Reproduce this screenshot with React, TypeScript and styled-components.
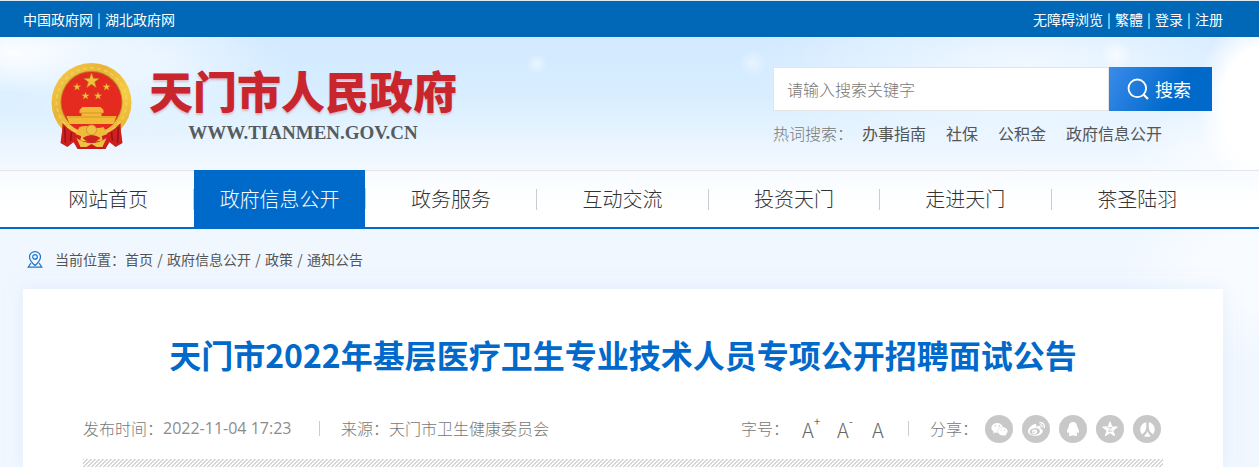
import React from "react";
import styled, { createGlobalStyle, css } from "styled-components";
import { FaWeixin, FaWeibo, FaRenren } from "react-icons/fa";

const GlobalStyle = createGlobalStyle`
  * { box-sizing: border-box; }
  body {
    margin: 0;
    background: #f0f7ff;
    color: #555;
    font: 400 14px/24px "Noto Sans CJK SC", sans-serif;
  }
  a { color: inherit; text-decoration: none; }
  button, input { font: inherit; }
`;

const Page = styled.div`
  background:
    radial-gradient(ellipse 140px 90px at 100% 270px, #f8fbff 40%, transparent),
    #f0f7ff;
`;

const Wrap = styled.div`
  padding: 0 36px 0 23px;
`;

const TopBar = styled(Wrap)`
  display: flex;
  justify-content: space-between;
  align-items: center;
  height: 37px;
  border-top: 1px solid #dfe9f2;
  background: #0068b7;
  color: #fff;
`;

const TopLinks = styled.nav`
  display: flex;
`;

const Bar = styled.span`
  width: 12px;
  text-align: center;
`;

const Header = styled.header`
  display: flex;
  justify-content: space-between;
  height: 133px;
  padding: 0 47px 0 51px;
  background:
    radial-gradient(circle 10px at 537px 27px, #ebf6ff, transparent),
    radial-gradient(circle 14px at 753px 26px, #e6f4ff, transparent),
    radial-gradient(circle 16px at calc(100% - 143px) 18px, #ffffffaa, #ffffff00),
    radial-gradient(ellipse 62px 90px at 100% 66px, #fff 60%, #ffffff00),
    radial-gradient(ellipse 110px 50px at calc(100% - 20px) 110px, #ffffffcc, #ffffff00),
    radial-gradient(ellipse 280px 90px at calc(100% - 230px) 30px, #ffffffaa, #ffffff00),
    radial-gradient(ellipse 80px 40px at 14px 16px, #ffffffee, #ffffff00),
    radial-gradient(ellipse 180px 70px at 80px 10px, #ffffff88, #ffffff00),
    radial-gradient(ellipse 150px 70px at 150px 30px, #ffffff66, #ffffff00),
    linear-gradient(#d2e9ff, #d8eeff 45%, #f4f9ff);
`;

const Brand = styled.a`
  display: flex;
  gap: 17px;
  padding-top: 26px;
`;

const BrandText = styled.div`
  display: flex;
  flex-direction: column;
  align-items: center;
`;

const BrandName = styled.strong`
  color: #c9252c;
  font-size: 44px;
  line-height: 54px;
  font-weight: 900;
  text-shadow: 0 2px 2px #c9252c44;
`;

const BrandUrl = styled.span`
  padding-top: 4px;
  color: #555b5e;
  font: 700 19px/24px "Liberation Serif", serif;
`;

const SearchArea = styled.div`
  width: 439px;
  padding-top: 30px;
`;

const SearchForm = styled.form`
  display: flex;
  height: 44px;
`;

const SearchInput = styled.input`
  flex: 1;
  min-width: 0;
  padding: 0 13px;
  border: 1px solid #e4e4e4;
  background: #fff;
  font-size: 16px;
  font-weight: 300;
  &::placeholder { color: #777; opacity: 1; }
`;

const SearchButton = styled.button`
  display: flex;
  align-items: center;
  gap: 6px;
  width: 103px;
  padding: 0 0 0 18px;
  border: 0;
  background: linear-gradient(120deg, #3b8bea, #0069ca 65%);
  color: #fff;
  font-size: 18px;
`;

const HotWords = styled.div`
  display: flex;
  gap: 20px;
  margin-top: 10px;
  font-size: 16px;
  white-space: nowrap;
`;

const HotLabel = styled.span`
  margin-right: -11px;
  color: #777;
  font-weight: 300;
`;

const Nav = styled.nav`
  border-top: 1px solid #e4e6e8;
  border-bottom: 2px solid #006aca;
  background: linear-gradient(#f7fbff, #fff 60%);
`;

const NavList = styled(Wrap)`
  display: grid;
  grid-template-columns: repeat(7, 1fr);
`;

const NavItem = styled.a<{ $active?: boolean }>`
  display: flex;
  align-items: center;
  height: 56px;
  color: #333;
  font-size: 20px;
  font-weight: 300;

  span {
    flex: 1;
    text-align: center;
  }

  &:not(:last-child)::after {
    content: "";
    width: 1px;
    height: 21px;
    background: #ccc;
  }

  ${(p) =>
    p.$active &&
    css`
      margin-top: -1px;
      height: 57px;
      color: #fff;
      span {
        line-height: 57px;
        background: #006aca;
      }
    `}
`;

const Crumbs = styled.nav`
  display: flex;
  align-items: center;
  height: 60px;
  padding: 0 27px;
  svg { margin-right: 12px; }
`;

const Slash = styled.span`
  width: 14px;
  text-align: center;
`;

const Card = styled.main`
  margin: 0 36px 0 23px;
  padding: 41px 60px 0;
  background: #fff;
  box-shadow: 0 0 14px #d3e4f788;
`;

const Title = styled.h1`
  margin: 0;
  color: #0069ca;
  font-size: 32px;
  line-height: 48px;
  font-weight: 700;
  text-align: center;
`;

const Meta = styled.div`
  display: flex;
  justify-content: space-between;
  align-items: center;
  height: 81px;
  padding: 19px 2px 0 0;
  color: #777;
  font-size: 16px;
  font-weight: 300;
  white-space: nowrap;
`;

const MetaGroup = styled.div`
  display: flex;
  align-items: center;
`;

const Divider = styled.i`
  width: 1px;
  height: 15px;
  margin: 0 21px 0 24px;
  background: #ccc;
`;

const DateText = styled.time`
  min-width: 132px;
  color: #8c8c8c;
  font-family: "Open Sans", sans-serif;
  font-weight: 400;
`;

const SizeButton = styled.button`
  position: relative;
  width: 35px;
  padding: 4px 0 0;
  border: 0;
  background: none;
  color: #666;
  font-size: 20px;
  text-align: left;

  &:last-of-type { width: 12px; }

  sup {
    position: absolute;
    top: -5px;
    left: 12px;
    font-size: 11px;
    font-weight: 400;
  }
`;

const Sizes = styled.div`
  display: flex;
  padding-left: 13px;
`;

const Shares = styled.div`
  display: flex;
  gap: 9px;
  padding: 2px 0 0 7px;
`;

const ShareLink = styled.a`
  display: grid;
  place-items: center;
  width: 28px;
  height: 28px;
  border-radius: 50%;
  background: #c8c8c8;
  color: #fff;
`;

const Hatch = styled.div`
  height: 8px;
  background: linear-gradient(135deg, #d4d4d4 12%, #fff 25%, #fff 38%, #d4d4d4 50%, #d4d4d4 62%, #fff 75%, #fff 88%, #d4d4d4) 0 0 / 4px 4px;
`;

const STAR = "M0-10 2.4-3.2 9.5-3.1 3.8 1.2 5.9 8.1 0 4-5.9 8.1-3.8 1.2-9.5-3.1-2.4-3.2Z";

const stars = [
  { x: 40, y: 18, s: 0.8 },
  { x: 25.5, y: 24, s: 0.4 },
  { x: 55, y: 24, s: 0.4 },
  { x: 34, y: 33, s: 0.4 },
  { x: 46.5, y: 33, s: 0.4 },
];

function Emblem() {
  return (
    <svg width="81" height="87" viewBox="0 0 80 87" aria-hidden="true">
      <defs>
        <linearGradient id="gold" x1="0" y1="0" x2="1" y2="1">
          <stop offset="0" stopColor="#f6d050" />
          <stop offset=".35" stopColor="#e8b437" />
          <stop offset=".65" stopColor="#f5cb45" />
          <stop offset="1" stopColor="#e0a82c" />
        </linearGradient>
      </defs>
      <path d="M12 58 68 58 71 80 64 84 58 79 54 86 26 86 22 79 16 84 9 80Z" fill="#c81a1c" />
      <ellipse cx="40" cy="39.500" rx="40" ry="39.500" fill="url(#gold)" />
      <ellipse cx="40" cy="39" rx="35" ry="34" fill="none" stroke="#f9dc70" strokeWidth="2" strokeDasharray="4 3" opacity=".5" />
      <circle cx="40" cy="39" r="31" fill="#b98024" />
      <circle cx="40" cy="39" r="30" fill="#e52a20" />
      {stars.map((p) => (
        <path key={p.x} d={STAR} transform={`translate(${p.x} ${p.y}) scale(${p.s})`} fill="#f4c23a" stroke="#c08a26" strokeWidth=".8" />
      ))}
      <path d="M31 44H49L52 47V50H50V53H65L62 61H18L15 53H30V50H28V47Z" fill="#f2b936" />
      <path d="M29 50H51M17 54H63" stroke="#d9952a" />
      <path d="M18 61H62Q52 70 40 70T18 61Z" fill="#e52a20" />
      <path d="M11 60Q20 70 30 72L27 85 22 79 16 83 10 79ZM69 60Q60 70 50 72L53 85 58 79 64 83 70 79Z" fill="#cf1f1f" />
      <path d="M13 64 14 80M20 69 19 78M67 64 66 80M60 69 61 78" stroke="#981216" strokeWidth="1.500" />
      <path d="M28 64Q34 62 40 64T52 64L56 71 48 74Q40 69 32 74L24 71Z" fill="#efbb3b" />
      <circle cx="40" cy="67" r="5" fill="#f1c345" stroke="#d09a30" />
      <path d="M31 75Q40 69 49 75L44 79H36Z" fill="#d22220" />
      <path d="M25 75Q32 80 40 80T55 75L51 84H45L40 81 35 84H29Z" fill="#efc044" />
    </svg>
  );
}

function SearchIcon() {
  return (
    <svg width="22" height="22" viewBox="0 0 22 22" fill="none" stroke="#fff" strokeWidth="1.800" aria-hidden="true">
      <circle cx="10.300" cy="10.300" r="8.800" />
      <path d="M16.500 16.500 21 21" strokeWidth="2.200" />
    </svg>
  );
}

function PinIcon() {
  return (
    <svg width="16" height="17" viewBox="0 0 16 17" fill="none" stroke="#1c75cc" strokeWidth="1.200" aria-hidden="true">
      <path d="M8 14.500Q2.500 9.500 2.500 5.900A5.500 5.300 0 0 1 13.500 5.900Q13.500 9.500 8 14.500Z" />
      <circle cx="8" cy="5.900" r="2.300" />
      <path d="M4 12 1.200 16.200H14.800L12 12" />
    </svg>
  );
}

function PenguinIcon() {
  return (
    <svg width="14" height="16" viewBox="0 0 14 16" fill="#fff" aria-hidden="true">
      <path d="M7 1C4 1 2.800 3.300 2.800 6 1.700 7.800.8 9.300 1 11.400c.1.8.8.5 1.400-.5.2.9.6 1.600 1.100 2.100-1.200.5-1 2 .4 2 1.300 0 2.300-.2 3.100-.8.8.6 1.800.8 3.100.8 1.400 0 1.600-1.500.4-2 .5-.5.9-1.200 1.100-2.100.6 1 1.300 1.300 1.400.5.2-2.100-.7-3.600-1.800-5.400C11.200 3.300 10 1 7 1Z" />
    </svg>
  );
}

function StarIcon() {
  return (
    <svg width="18" height="18" viewBox="0 0 18 18" aria-hidden="true">
      <path d={STAR} transform="translate(9 9.500) scale(.75)" fill="#fff" stroke="#fff" strokeWidth="1.500" strokeLinejoin="round" />
      <path d="M6.500 7.700H10.800L7.300 11Q9 11.600 11.500 11" fill="none" stroke="#c8c8c8" strokeWidth=".9" />
    </svg>
  );
}

const navItems = ["网站首页", "政府信息公开", "政务服务", "互动交流", "投资天门", "走进天门", "茶圣陆羽"];
const hotWords = ["办事指南", "社保", "公积金", "政府信息公开"];
const crumbs = ["首页", "政府信息公开", "政策", "通知公告"];
const shares = [
  { name: "微信", icon: <FaWeixin size={17} /> },
  { name: "微博", icon: <FaWeibo size={17} /> },
  { name: "QQ", icon: <PenguinIcon /> },
  { name: "QQ空间", icon: <StarIcon /> },
  { name: "人人网", icon: <FaRenren size={15} /> },
];

function LinkRow({ items }: { items: string[] }) {
  return (
    <TopLinks>
      {items.map((t, i) => (
        <React.Fragment key={t}>
          {i > 0 && <Bar>|</Bar>}
          <a href="#">{t}</a>
        </React.Fragment>
      ))}
    </TopLinks>
  );
}

export default function App() {
  return (
    <Page>
      <GlobalStyle />
      <TopBar>
        <LinkRow items={["中国政府网", "湖北政府网"]} />
        <LinkRow items={["无障碍浏览", "繁體", "登录", "注册"]} />
      </TopBar>
      <Header>
        <Brand href="#">
          <Emblem />
          <BrandText>
            <BrandName>天门市人民政府</BrandName>
            <BrandUrl>WWW.TIANMEN.GOV.CN</BrandUrl>
          </BrandText>
        </Brand>
        <SearchArea>
          <SearchForm onSubmit={(e) => e.preventDefault()}>
            <SearchInput type="text" aria-label="搜索关键字" placeholder="请输入搜索关键字" />
            <SearchButton type="submit">
              <SearchIcon />
              搜索
            </SearchButton>
          </SearchForm>
          <HotWords>
            <HotLabel>热词搜索：</HotLabel>
            {hotWords.map((w) => (
              <a href="#" key={w}>{w}</a>
            ))}
          </HotWords>
        </SearchArea>
      </Header>
      <Nav>
        <NavList>
          {navItems.map((t) => (
            <NavItem href="#" key={t} $active={t === "政府信息公开"}>
              <span>{t}</span>
            </NavItem>
          ))}
        </NavList>
      </Nav>
      <Crumbs>
        <PinIcon />
        <span>当前位置：</span>
        {crumbs.map((t, i) => (
          <React.Fragment key={t}>
            {i > 0 && <Slash>/</Slash>}
            <a href="#">{t}</a>
          </React.Fragment>
        ))}
      </Crumbs>
      <Card>
        <Title>天门市2022年基层医疗卫生专业技术人员专项公开招聘面试公告</Title>
        <Meta>
          <MetaGroup>
            <span>发布时间：</span>
            <DateText>2022-11-04 17:23</DateText>
            <Divider />
            <span>来源：天门市卫生健康委员会</span>
          </MetaGroup>
          <MetaGroup>
            <span>字号：</span>
            <Sizes>
              <SizeButton type="button">A<sup>+</sup></SizeButton>
              <SizeButton type="button">A<sup>-</sup></SizeButton>
              <SizeButton type="button">A</SizeButton>
            </Sizes>
            <Divider />
            <span>分享：</span>
            <Shares>
              {shares.map((s) => (
                <ShareLink href="#" key={s.name} aria-label={s.name}>{s.icon}</ShareLink>
              ))}
            </Shares>
          </MetaGroup>
        </Meta>
        <Hatch />
      </Card>
    </Page>
  );
}
